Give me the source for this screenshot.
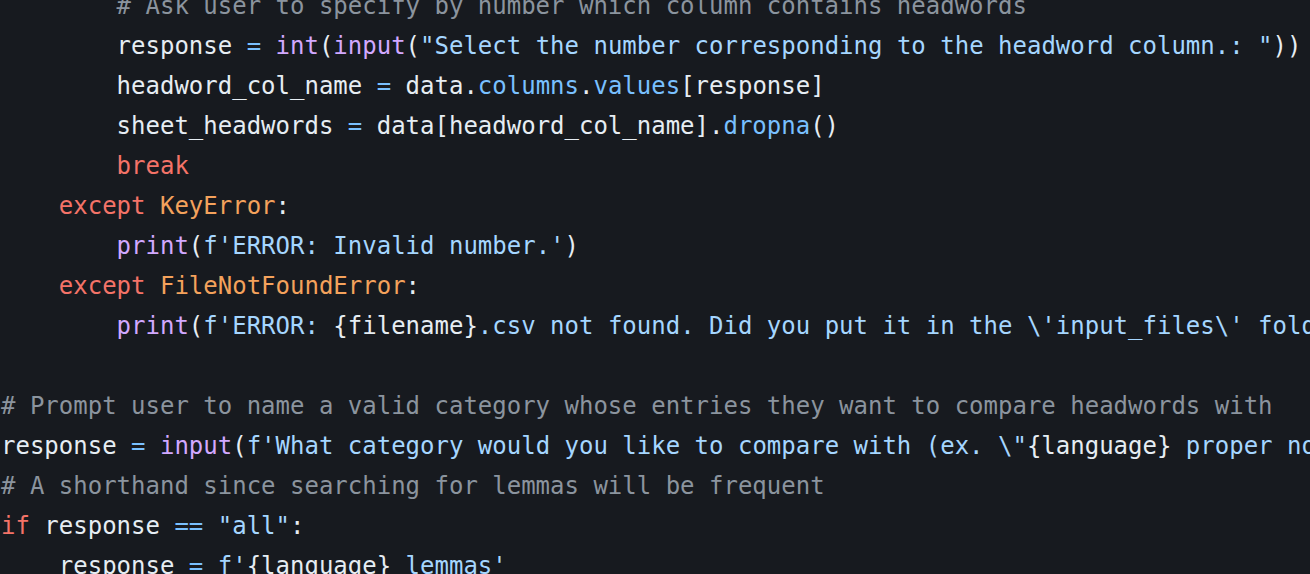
import React from "react";

// token colours
const C = {
  t: "text-[#e6edf3]",
  k: "text-[#f47368]",
  o: "text-[#f4a25c]",
  f: "text-[#d2a8ff]",
  s: "text-[#a5d6ff]",
  b: "text-[#79c0ff]",
  c: "text-[#8b949e]",
};

const lines = [
  [["        ", "t"], ["# Ask user to specify by number which column contains headwords", "c"]],
  [["        response ", "t"], ["=", "b"], [" ", "t"], ["int", "f"], ["(", "t"], ["input", "f"], ["(", "t"], ['"Select the number corresponding to the headword column.: "', "s"], ["))", "t"]],
  [["        headword_col_name ", "t"], ["=", "b"], [" data.", "t"], ["columns", "b"], [".", "t"], ["values", "b"], ["[response]", "t"]],
  [["        sheet_headwords ", "t"], ["=", "b"], [" data[headword_col_name].", "t"], ["dropna", "b"], ["()", "t"]],
  [["        ", "t"], ["break", "k"]],
  [["    ", "t"], ["except", "k"], [" ", "t"], ["KeyError", "o"], [":", "t"]],
  [["        ", "t"], ["print", "f"], ["(", "t"], ["f'ERROR: Invalid number.'", "s"], [")", "t"]],
  [["    ", "t"], ["except", "k"], [" ", "t"], ["FileNotFoundError", "o"], [":", "t"]],
  [["        ", "t"], ["print", "f"], ["(", "t"], ["f'ERROR: ", "s"], ["{filename}", "t"], [".csv not found. Did you put it in the \\'input_files\\' folder?'", "s"], [")", "t"]],
  [[" ", "t"]],
  [["# Prompt user to name a valid category whose entries they want to compare headwords with", "c"]],
  [["response ", "t"], ["=", "b"], [" ", "t"], ["input", "f"], ["(", "t"], ["f'What category would you like to compare with (ex. \\\"", "s"], ["{language}", "t"], [" proper nouns\\\"): '", "s"], [")", "t"]],
  [["# A shorthand since searching for lemmas will be frequent", "c"]],
  [["if", "k"], [" response ", "t"], ["==", "b"], [" ", "t"], ['"all"', "s"], [":", "t"]],
  [["    response ", "t"], ["=", "b"], [" ", "t"], ["f'", "s"], ["{language}", "t"], [" lemmas'", "s"]],
];

export default function App() {
  return (
    <div className="w-[1310px] h-[574px] overflow-hidden bg-[#171a1f]">
      <div className="-mt-[14px] pl-[1px] font-['DejaVu_Sans_Mono',monospace] text-[24px] leading-[40px] whitespace-pre">
        {lines.map((line, i) => (
          <div key={i} className="h-[40px]">
            {line.map(([txt, col], j) => (
              <span key={j} className={C[col]}>{txt}</span>
            ))}
          </div>
        ))}
      </div>
    </div>
  );
}
